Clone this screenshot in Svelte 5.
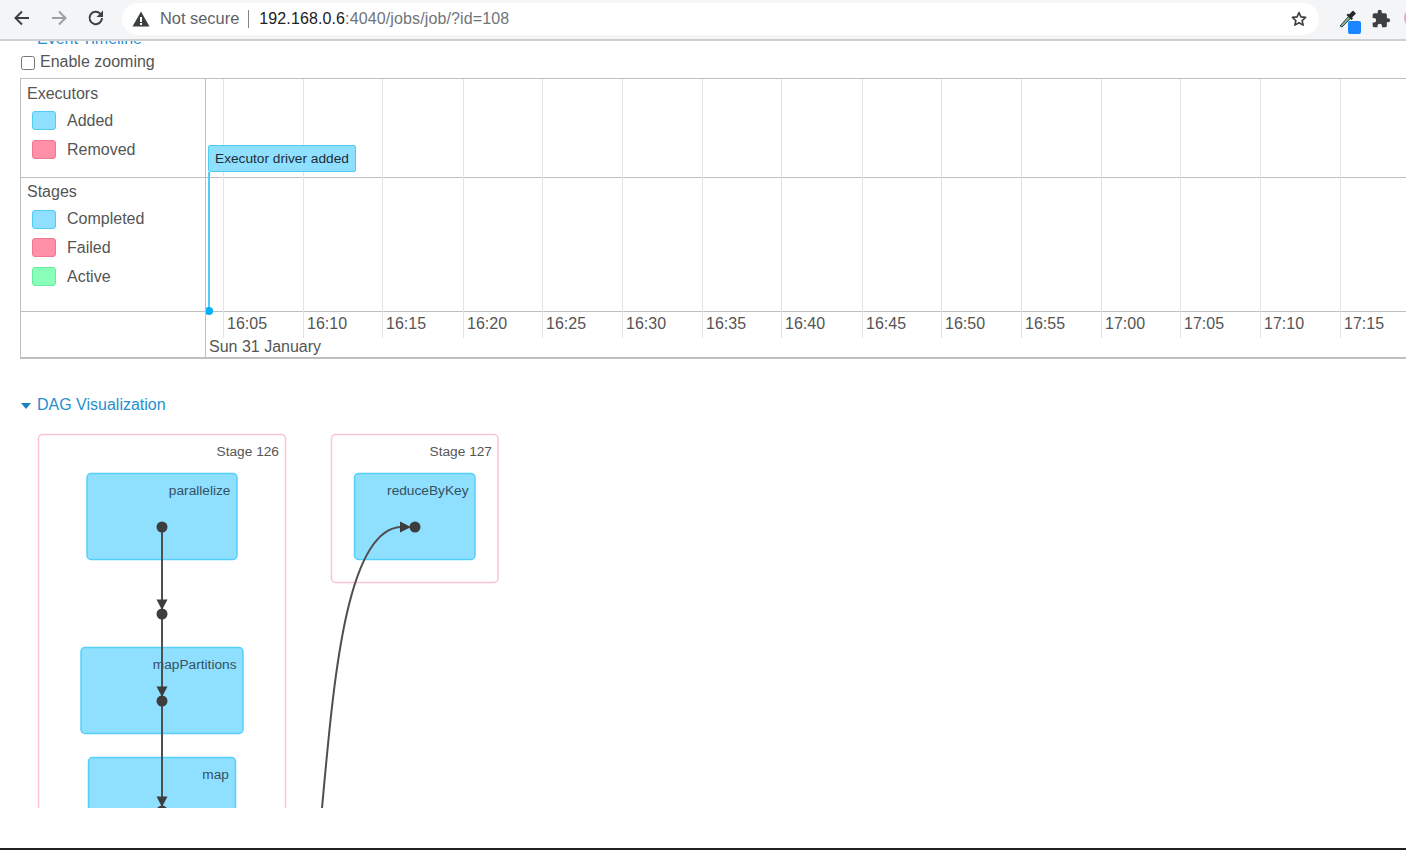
<script>
  const ticks = [
    ['16:05', 223], ['16:10', 303], ['16:15', 382], ['16:20', 463], ['16:25', 542],
    ['16:30', 622], ['16:35', 702], ['16:40', 781], ['16:45', 862], ['16:50', 941],
    ['16:55', 1021], ['17:00', 1101], ['17:05', 1180], ['17:10', 1260], ['17:15', 1340]
  ];
  const execLegend = [['Added', 'blue'], ['Removed', 'red']];
  const stageLegend = [['Completed', 'blue'], ['Failed', 'red'], ['Active', 'green']];
  const nodes = [
    { x: 87, y: 473.5, w: 150, h: 86, label: 'parallelize' },
    { x: 81, y: 647.5, w: 162, h: 86, label: 'mapPartitions' },
    { x: 88.5, y: 757.5, w: 147, h: 86, label: 'map' },
    { x: 354.5, y: 473.5, w: 120.5, h: 86, label: 'reduceByKey' }
  ];
  const dots = [[162, 527], [162, 614], [162, 701], [162, 811], [415, 527]];
  const heads = [
    '156.500,599.500 167.500,599.500 162,610',
    '156.500,686.500 167.500,686.500 162,697',
    '156.500,796.500 167.500,796.500 162,807',
    '400,521.500 400,532.500 411,527'
  ];
</script>

<div class="window">
  <header class="toolbar">
    <svg class="nav" width="20" height="20" viewBox="0 0 20 20" aria-hidden="true"><path d="M17 10H4M10 3.500 3.500 10l6.500 6.500" fill="none" stroke="#3c4043" stroke-width="2"/></svg>
    <svg class="nav" width="20" height="20" viewBox="0 0 20 20" aria-hidden="true"><path d="M3 10h13M10 3.500l6.500 6.500-6.500 6.500" fill="none" stroke="#9aa0a6" stroke-width="2"/></svg>
    <svg class="nav" width="20" height="20" viewBox="0 0 20 20" aria-hidden="true"><path d="M16 10a6.200 6.200 0 1 1-1.800-4.400" fill="none" stroke="#3c4043" stroke-width="2"/><path d="M17 2.500V9h-6.500z" fill="#3c4043"/></svg>
    <div class="omnibox">
      <svg class="warn" width="18" height="16" viewBox="0 0 18 16" aria-hidden="true"><path fill-rule="evenodd" d="M9 .5 17.500 15.500H.5zM8 6v5h2V6zm0 6v2h2v-2z" fill="#3c4043"/></svg>
      <span class="secure">Not secure</span>
      <span class="sep"></span>
      <span class="url"><b>192.168.0.6</b>:4040/jobs/job/?id=108</span>
      <svg class="star" width="18" height="18" viewBox="0 0 24 24" aria-hidden="true"><path d="M12 3.500l2.600 5.700 6.200.7-4.600 4.200 1.300 6.100L12 17.100l-5.500 3.100 1.300-6.100-4.600-4.200 6.200-.7z" fill="none" stroke="#3c4043" stroke-width="2.200" stroke-linejoin="round"/></svg>
    </div>
    <div class="dropper">
      <svg width="20" height="20" viewBox="0 0 20 20" aria-hidden="true"><path d="M2 17 10.500 7.500l2 2L4 18z" fill="#7fb69a" stroke="#3c4043" stroke-width="1"/><path d="M11 5.500 15 1.500l3 3-4 4 1 1-1.500 1.500-5-5L10 4.500z" fill="#26292b"/></svg>
      <span class="blue-badge"></span>
    </div>
    <svg class="puzzle" width="20" height="20" viewBox="0 0 24 24" aria-hidden="true"><path d="M20.500 11H19V7a2 2 0 0 0-2-2h-4V3.500a2.500 2.500 0 0 0-5 0V5H4a2 2 0 0 0-2 2v3.800h1.500a2.700 2.700 0 0 1 0 5.400H2V20a2 2 0 0 0 2 2h3.800v-1.500a2.700 2.700 0 0 1 5.400 0V22H17a2 2 0 0 0 2-2v-4h1.500a2.500 2.500 0 0 0 0-5z" fill="#3c4043"/></svg>
    <span class="avatar"></span>
  </header>

  <main class="page">
    <div class="event-link">Event Timeline</div>
    <label class="zoom"><input type="checkbox" /><span>Enable zooming</span></label>

    <section class="timeline">
      <div class="labels">
        <div class="group executors">
          <div class="group-title">Executors</div>
          {#each execLegend as [name, tone]}
            <div class="legend"><i class="swatch {tone}"></i>{name}</div>
          {/each}
        </div>
        <div class="group stages">
          <div class="group-title">Stages</div>
          {#each stageLegend as [name, tone]}
            <div class="legend"><i class="swatch {tone}"></i>{name}</div>
          {/each}
        </div>
        <div class="group blank"></div>
      </div>

      <div class="canvas">
        <div class="row-line first"></div>
        <div class="row-line second"></div>
        {#each ticks as [time, x]}
          <div class="tick" style="left: {x - 206}px"></div>
          <div class="tick-label" style="left: {x - 202}px">{time}</div>
        {/each}
        <div class="event-line"></div>
        <div class="event-dot"></div>
        <div class="event-box">Executor driver added</div>
        <div class="date">Sun 31 January</div>
      </div>
    </section>

    <div class="dag-link"><i class="caret"></i>DAG Visualization</div>

    <div class="dag">
      <svg width="1406" height="383" viewBox="0 425 1406 383" aria-label="DAG">
        <rect class="stage" x="38.500" y="434.500" width="247" height="500" rx="4" />
        <rect class="stage" x="331.500" y="434.500" width="166.500" height="148" rx="4" />
        <text class="stage-label" x="279" y="456">Stage 126</text>
        <text class="stage-label" x="492" y="456">Stage 127</text>
        {#each nodes as n}
          <rect class="node" x={n.x} y={n.y} width={n.w} height={n.h} rx="4" />
          <text class="node-label" x={n.x + n.w - 6.500} y={n.y + 21.500}>{n.label}</text>
        {/each}
        <path class="edge" d="M162 527V900" />
        <path class="edge" d="M322 808C333 690 345 527 402 527" />
        {#each heads as points}
          <polygon class="head" {points} />
        {/each}
        {#each dots as [cx, cy]}
          <circle class="dot" {cx} {cy} r="5.500" />
        {/each}
      </svg>
    </div>
  </main>
  <div class="bottom-edge"></div>
</div>

<style>
  :global(body) { margin: 0; background: #fff; }
  .window {
    width: 1406px;
    height: 850px;
    display: flex;
    flex-direction: column;
    overflow: hidden;
    font-family: "Liberation Sans", Arial, sans-serif;
    color: #555;
    background: #fff;
  }
  .toolbar {
    flex: 0 0 41px;
    display: flex;
    align-items: flex-start;
    padding: 8px 0 0 12px;
    box-sizing: border-box;
    background: #f4f5f6;
    border-bottom: 2px solid #cfd0d1;
    height: 41px;
  }
  .nav { margin-right: 17px; flex: none; }
  .omnibox {
    flex: none;
    width: 1197px;
    height: 32px;
    margin: -5px 0 0 -1px;
    border-radius: 16px;
    background: #fff;
    display: flex;
    align-items: center;
    box-sizing: border-box;
    padding: 0 11px 0 10px;
    font-size: 16px;
  }
  .warn { flex: none; }
  .secure { margin: 0 0 2px 10px; color: #5f6368; font-size: 16.400px; }
  .sep { width: 1px; height: 18px; background: #80868b; margin: 0 10px 0 9px; }
  .url { color: #70757a; letter-spacing: 0.120px; }
  .url b { font-weight: normal; color: #202124; }
  .star { margin-left: auto; }
  .dropper { position: relative; width: 28px; height: 26px; margin: 1px 0 0 17px; flex: none; }
  .dropper svg { position: absolute; left: 2px; top: 0; }
  .blue-badge {
    position: absolute;
    left: 12px;
    top: 12px;
    width: 13px;
    height: 13px;
    border-radius: 2px;
    background: #1a85ff;
  }
  .puzzle { margin: 1px 0 0 7px; flex: none; }
  .avatar {
    flex: none;
    width: 14px;
    height: 18px;
    margin: 1px 0 0 13px;
    border: 2px solid #e9a6d4;
    border-radius: 50%;
    box-sizing: border-box;
  }
  .page {
    flex: 1;
    min-height: 0;
    overflow: hidden;
    padding-left: 20px;
  }
  .event-link {
    margin: -11px 0 0 17px;
    height: 18px;
    line-height: 18px;
    font-size: 16px;
    color: #1f8fcf;
  }
  .zoom {
    display: flex;
    align-items: center;
    height: 22px;
    margin-top: 4px;
    font-size: 16px;
  }
  .zoom input { margin: 0 5px 0 1px; width: 14px; height: 14px; }
  .zoom span { position: relative; top: -1px; }
  .timeline {
    margin-top: 4px;
    width: 1386px;
    height: 281px;
    box-sizing: border-box;
    border-top: 1px solid #bfbfbf;
    border-bottom: 2px solid #bfbfbf;
    border-left: 1px solid #bfbfbf;
    display: flex;
    font-size: 16px;
  }
  .labels {
    flex: 0 0 184px;
    display: flex;
    flex-direction: column;
    border-right: 1px solid #bfbfbf;
  }
  .group { box-sizing: border-box; padding: 6px 0 0 6px; }
  .executors { height: 99px; border-bottom: 1px solid #bfbfbf; }
  .stages { height: 134px; padding-top: 5px; border-bottom: 1px solid #bfbfbf; }
  .blank { flex: 1; }
  .group-title { height: 18px; line-height: 18px; }
  .legend {
    display: flex;
    align-items: center;
    height: 29px;
    padding-left: 5px;
  }
  .group-title + .legend { margin-top: 3px; }
  .stages .group-title + .legend { margin-top: 4px; height: 28px; }
  .swatch {
    width: 24px;
    height: 19px;
    margin-right: 11px;
    box-sizing: border-box;
    border-radius: 3px;
    border: 1.500px solid;
  }
  .swatch.blue { background: #8fdfff; border-color: #4fcbf6; }
  .swatch.red { background: #ff90a8; border-color: #ee7792; }
  .swatch.green { background: #8affb9; border-color: #62ed9f; }
  .canvas { position: relative; flex: 1; min-width: 0; overflow: hidden; }
  .row-line { position: absolute; left: 0; right: 0; height: 1px; background: #bfbfbf; }
  .row-line.first { top: 98px; }
  .row-line.second { top: 232px; }
  .tick { position: absolute; top: 0; height: 259px; width: 1px; background: #e3e3e3; }
  .tick-label { position: absolute; top: 236px; height: 18px; line-height: 18px; }
  .event-line { position: absolute; left: 2px; top: 93px; height: 140px; width: 2px; background: #4fcbf6; }
  .event-dot { position: absolute; left: -1px; top: 228px; width: 8px; height: 8px; border-radius: 50%; background: #00b2f2; }
  .event-box {
    position: absolute;
    left: 2px;
    top: 66px;
    width: 148px;
    height: 27px;
    box-sizing: border-box;
    padding-left: 6px;
    line-height: 25px;
    font-size: 13.700px;
    color: #1f2d36;
    background: #8fdfff;
    border: 1px solid #4fcbf6;
    border-radius: 2px;
  }
  .date { position: absolute; left: 3px; top: 259px; height: 18px; line-height: 18px; }
  .dag-link {
    display: flex;
    align-items: center;
    margin-top: 37px;
    height: 18px;
    font-size: 16px;
    color: #1f8fcf;
  }
  .caret {
    width: 0;
    height: 0;
    margin: 1px 6px 0 1px;
    border-left: 5.500px solid transparent;
    border-right: 5.500px solid transparent;
    border-top: 6px solid #1a80c0;
  }
  .dag { margin: 11px 0 0 -20px; height: 383px; overflow: hidden; }
  .dag svg { display: block; }
  .stage { fill: #fff; stroke: #fbc3d0; stroke-width: 1.500; }
  .node { fill: #8fdfff; stroke: #55d0fa; stroke-width: 1.500; }
  .stage-label, .node-label {
    text-anchor: end;
    font-family: "Liberation Sans", Arial, sans-serif;
    font-size: 13.700px;
  }
  .stage-label { fill: #555; }
  .node-label { fill: #35505f; }
  .edge { fill: none; stroke: #4f4f4f; stroke-width: 2; }
  .head, .dot { fill: #3d3d3d; }
  .bottom-edge { flex: 0 0 2px; background: #222; margin-top: 40px; }
</style>
